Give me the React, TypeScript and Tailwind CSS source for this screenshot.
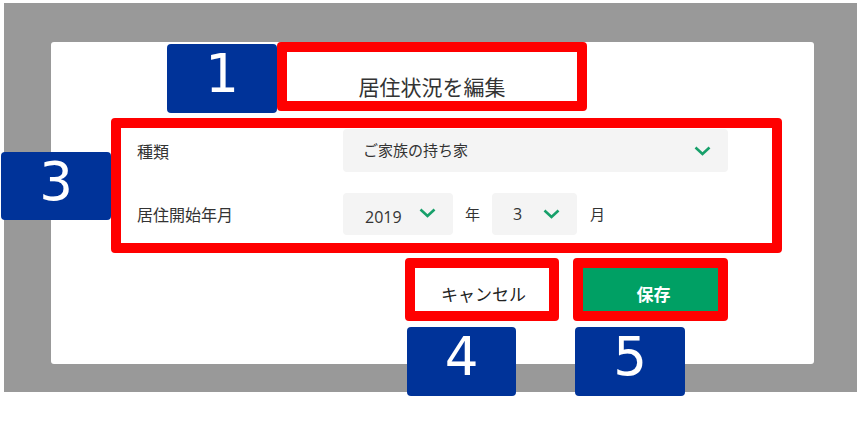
import React from "react";

const jp = "font-['Noto_Sans_CJK_JP','Noto_Sans',sans-serif]";

function Chevron() {
    return (
        <svg width="17" height="10" viewBox="0 0 17 10" className="shrink-0">
            <polyline points="1.5,1.5 8.5,8 15.5,1.5" fill="none" stroke="#17a06a" strokeWidth="2.6" />
        </svg>
    );
}

function Marker({ n, className }: { n: string; className: string }) {
    return (
        <div
            className={`absolute flex items-center justify-center rounded-[4px] bg-[#003399] pb-[10px] font-['DejaVu_Sans',sans-serif] text-[53px] leading-none text-white ${className}`}
        >
            {n}
        </div>
    );
}

export default function App() {
    return (
        <div className={`relative h-[427px] w-[858px] overflow-hidden bg-white text-[#333333] ${jp}`}>
            {/* Dimmed backdrop */}
            <div className="ml-[4px] mt-[3px] h-[389px] w-[853px] bg-[#999999] pl-[47px] pt-[39px]">
                {/* Dialog */}
                <div className="flex h-[322px] w-[763px] flex-col rounded-[3px] bg-white">
                    {/* Title */}
                    <div className="ml-[226px] flex h-[69px] w-[310px] items-center justify-center rounded-[4px] border-[10px] border-[#ff0000] pt-[20px] text-[21px] leading-none">
                        居住状況を編集
                    </div>

                    {/* Form */}
                    <div className="ml-[60px] mt-[7px] flex h-[135px] w-[671px] flex-col rounded-[4px] border-[10px] border-[#ff0000] pt-[1px]">
                        <div className="flex items-center">
                            <div className="w-[222px] pl-[16px] text-[16px]">種類</div>
                            <div className="flex h-[43px] w-[385px] items-center justify-between rounded-[4px] bg-[#f4f4f4] pl-[20px] pr-[17px] text-[15px]">
                                <span>ご家族の持ち家</span>
                                <Chevron />
                            </div>
                        </div>
                        <div className="mt-[21px] flex items-center">
                            <div className="w-[222px] pl-[16px] text-[16px]">居住開始年月</div>
                            <div className="flex h-[42px] w-[110px] items-center justify-between rounded-[4px] bg-[#f4f4f4] pl-[22px] pr-[17px] pt-[6px] text-[16px]">
                                <span className="font-['Open_Sans',sans-serif]">2019</span>
                                <span className="-mt-[8px]"><Chevron /></span>
                            </div>
                            <span className="mx-[12px] text-[15px]">年</span>
                            <div className="flex h-[42px] w-[85px] items-center justify-between rounded-[4px] bg-[#f4f4f4] pl-[21px] pr-[17px] text-[16px]">
                                <span className="font-['Open_Sans',sans-serif]">3</span>
                                <Chevron />
                            </div>
                            <span className="ml-[13px] text-[15px]">月</span>
                        </div>
                    </div>

                    {/* Actions */}
                    <div className="ml-[354px] mt-[5px] flex gap-[14px]">
                        <button className="flex h-[63px] w-[154px] items-center justify-center rounded-[4px] border-[10px] border-[#ff0000] bg-white pl-[3px] pt-[8px] text-[17px] text-[#222222]">
                            キャンセル
                        </button>
                        <button className="flex h-[63px] w-[155px] items-center justify-center rounded-[4px] border-[10px] border-[#ff0000] bg-[#00a064] pl-[6px] pt-[8px] text-[17px] font-bold text-white">
                            保存
                        </button>
                    </div>
                </div>
            </div>

            {/* Annotation markers */}
            <Marker n="1" className="left-[167px] top-[44px] h-[69px] w-[110px]" />
            <Marker n="3" className="left-[1px] top-[152px] h-[68px] w-[110px]" />
            <Marker n="4" className="left-[407px] top-[327px] h-[69px] w-[109px]" />
            <Marker n="5" className="left-[575px] top-[327px] h-[69px] w-[110px]" />
        </div>
    );
}
